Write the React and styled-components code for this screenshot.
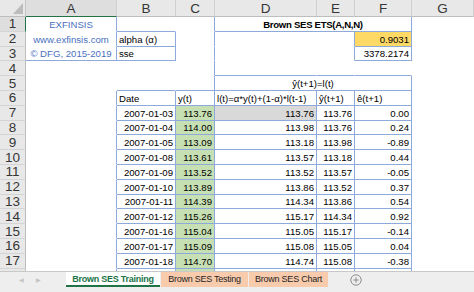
import React from "react";
import styled, { createGlobalStyle } from "styled-components";

const LINE = "#8eaadb";
const GREEN = "#217346";

const GlobalStyle = createGlobalStyle`
  html, body {
    margin: 0;
    padding: 0;
    background: #fff;
  }
  body {
    width: 474px;
    height: 292px;
    overflow: hidden;
    font-family: "Liberation Sans", Arial, sans-serif;
  }
`;

const Window = styled.div`
  display: flex;
  flex-direction: column;
  width: 474px;
  height: 292px;
  overflow: hidden;
`;

const Sheet = styled.div`
  flex: 1;
  min-height: 0;
  overflow: hidden;
  display: grid;
  grid-template-columns: 26px 91px 59px 39px 102px 38px 57px 62px;
  grid-template-rows: 17px;
  grid-auto-rows: 14.8px;
`;

const Corner = styled.div`
  box-sizing: border-box;
  background: #e8e8e8;
  border-right: 1px solid #c6c6c6;
  border-bottom: 1px solid #bdbdbd;
  display: flex;
  align-items: flex-end;
  justify-content: flex-end;
  padding: 0 2px 2px 0;
`;

const ColHead = styled.div`
  box-sizing: border-box;
  background: ${(p) => (p.$active ? "#dedede" : "#e8e8e8")};
  border-right: 1px solid #cfcfcf;
  border-bottom: 1px solid ${(p) => (p.$active ? GREEN : "#bdbdbd")};
  display: flex;
  align-items: center;
  justify-content: center;
  font-size: 13.5px;
  color: #363636;
`;

const RowHead = styled.div`
  box-sizing: border-box;
  background: ${(p) => (p.$active ? "#dedede" : "#e8e8e8")};
  border-right: 1px solid ${(p) => (p.$active ? GREEN : "#bdbdbd")};
  border-bottom: 1px solid #d4d4d4;
  display: flex;
  align-items: center;
  justify-content: center;
  font-size: 13.5px;
  color: #363636;
  overflow: hidden;
`;

const Cell = styled.div`
  box-sizing: border-box;
  grid-column: span ${(p) => p.$span || 1};
  display: flex;
  align-items: center;
  justify-content: ${(p) =>
    p.$align === "right"
      ? "flex-end"
      : p.$align === "center"
      ? "center"
      : "flex-start"};
  padding: 1px 2px 0;
  font-size: 9.6px;
  font-weight: ${(p) => (p.$bold ? 700 : 400)};
  letter-spacing: ${(p) => (p.$bold ? "-0.3px" : "0")};
  color: ${(p) => (p.$blue ? "#4a70bf" : "#000")};
  background: ${(p) => p.$bg || "transparent"};
  border-right: 1px solid ${(p) => (p.$r ? LINE : "transparent")};
  border-bottom: 1px solid ${(p) => (p.$b ? LINE : "transparent")};
  white-space: nowrap;
  overflow: hidden;
`;

const TabBar = styled.div`
  flex: none;
  box-sizing: border-box;
  height: 21px;
  display: flex;
  align-items: flex-start;
  background: #eeeeee;
  border-top: 1px solid #c8c8c8;
`;

const Nav = styled.div`
  width: 66px;
  height: 15px;
  display: flex;
  align-items: center;
  gap: 12px;
  padding-left: 19px;
  box-sizing: border-box;
  color: #c4c4c4;
  font-size: 6px;
`;

const Tab = styled.div`
  box-sizing: border-box;
  width: ${(p) => p.$w}px;
  height: 15px;
  margin-right: 1px;
  display: flex;
  align-items: center;
  justify-content: center;
  font-size: 9px;
  letter-spacing: -0.25px;
  font-weight: ${(p) => (p.$active ? 700 : 400)};
  color: ${(p) => (p.$active ? GREEN : "#1e1e1e")};
  background: ${(p) => (p.$active ? "#fff" : "#f8cbad")};
  border-bottom: 2px solid ${(p) => (p.$active ? GREEN : "transparent")};
  padding-top: 1px;
`;

const AddSheet = styled.div`
  height: 15px;
  margin-left: 21px;
  display: flex;
  align-items: center;
`;

const cols = ["A", "B", "C", "D", "E", "F", "G"];

const data = [
  ["2007-01-03", "113.76", "113.76", "113.76", "0.00"],
  ["2007-01-04", "114.00", "113.98", "113.76", "0.24"],
  ["2007-01-05", "113.09", "113.18", "113.98", "-0.89"],
  ["2007-01-08", "113.61", "113.57", "113.18", "0.44"],
  ["2007-01-09", "113.52", "113.52", "113.57", "-0.05"],
  ["2007-01-10", "113.89", "113.86", "113.52", "0.37"],
  ["2007-01-11", "114.39", "114.34", "113.86", "0.54"],
  ["2007-01-12", "115.26", "115.17", "114.34", "0.92"],
  ["2007-01-16", "115.04", "115.05", "115.17", "-0.14"],
  ["2007-01-17", "115.09", "115.08", "115.05", "0.04"],
  ["2007-01-18", "114.70", "114.74", "115.08", "-0.38"],
  ["", "", "", "", ""],
];

const rows = [
  [
    { t: "EXFINSIS", a: "center", blue: true, r: true },
    { b: true },
    { r: true },
    { t: "Brown SES ETS(A,N,N)", span: 3, a: "center", bold: true, r: true, b: true },
    {},
  ],
  [
    { t: "www.exfinsis.com", a: "center", blue: true, r: true },
    { t: "alpha (α)", r: true, b: true },
    { r: true },
    {},
    { r: true },
    { t: "0.9031", a: "right", bg: "#ffd966", r: true, b: true },
    {},
  ],
  [
    { t: "© DFG, 2015-2019", a: "center", blue: true, r: true, b: true },
    { t: "sse", r: true, b: true },
    { r: true },
    {},
    { r: true },
    { t: "3378.2174", a: "right", r: true, b: true },
    {},
  ],
  [{}, {}, { r: true }, { b: true }, { b: true }, { b: true }, {}],
  [
    {},
    { b: true },
    { r: true, b: true },
    { t: "ŷ(t+1)=l(t)", span: 3, a: "center", r: true, b: true },
    {},
  ],
  [
    { r: true },
    { t: "Date", r: true, b: true },
    { t: "y(t)", r: true, b: true },
    { t: "l(t)=α*y(t)+(1-α)*l(t-1)", r: true, b: true },
    { t: "ŷ(t+1)", r: true, b: true },
    { t: "ê(t+1)", r: true, b: true },
    {},
  ],
  ...data.map((d, i) => [
    { r: true },
    { t: d[0], a: "right", r: true, b: true },
    { t: d[1], a: "right", bg: "#c6e0b4", r: true, b: true },
    { t: d[2], a: "right", bg: i === 0 ? "#d9d9d9" : undefined, r: true, b: true },
    { t: d[3], a: "right", r: true, b: true },
    { t: d[4], a: "right", r: true, b: true },
    {},
  ]),
];

function App() {
  return (
    <>
      <GlobalStyle />
      <Window>
        <Sheet>
          <Corner>
            <svg width="10" height="11" viewBox="0 0 10 11">
              <path d="M10 0 L10 11 L0 11 Z" fill="#bcbcbc" />
            </svg>
          </Corner>
          {cols.map((c) => (
            <ColHead key={c} $active={c === "A"}>
              {c}
            </ColHead>
          ))}
          {rows.map((row, i) => (
            <React.Fragment key={i}>
              <RowHead $active={i === 0}>{i + 1}</RowHead>
              {row.map((cell, j) => (
                <Cell
                  key={j}
                  $span={cell.span}
                  $align={cell.a}
                  $bold={cell.bold}
                  $blue={cell.blue}
                  $bg={cell.bg}
                  $r={cell.r}
                  $b={cell.b}
                >
                  {cell.t}
                </Cell>
              ))}
            </React.Fragment>
          ))}
        </Sheet>
        <TabBar>
          <Nav>
            <span>◀</span>
            <span>▶</span>
          </Nav>
          <Tab $active $w={94}>Brown SES Training</Tab>
          <Tab $w={87}>Brown SES Testing</Tab>
          <Tab $w={79}>Brown SES Chart</Tab>
          <AddSheet>
            <svg width="12" height="12" viewBox="0 0 12 12">
              <circle cx="6" cy="6" r="5.2" fill="none" stroke="#8c8c8c" strokeWidth="1" />
              <path d="M6 3.3 V8.7 M3.3 6 H8.7" stroke="#8c8c8c" strokeWidth="1" />
            </svg>
          </AddSheet>
        </TabBar>
      </Window>
    </>
  );
}

export default App;
